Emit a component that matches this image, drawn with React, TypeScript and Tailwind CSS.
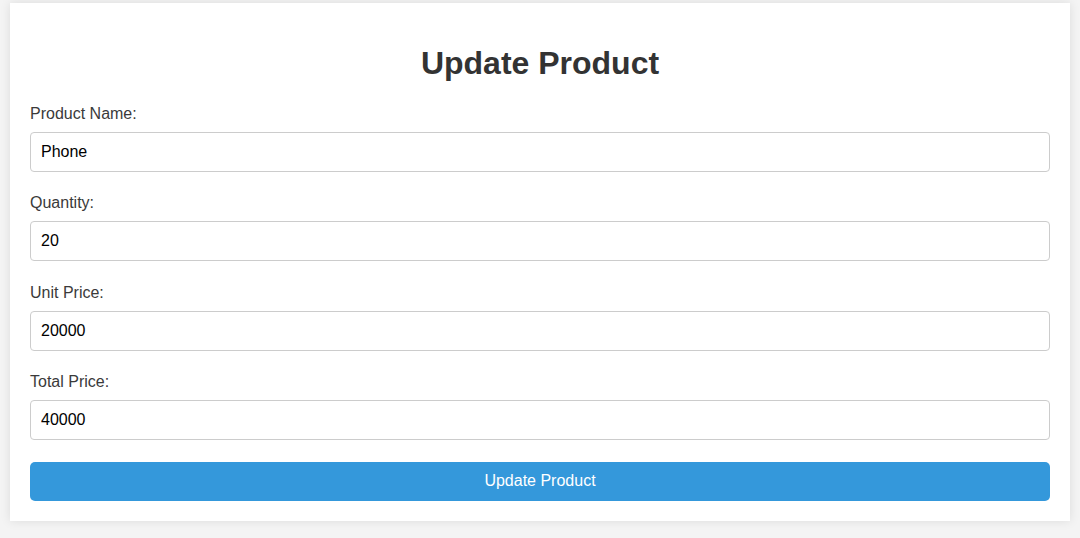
const fields = [
  { label: "Product Name:", value: "Phone" },
  { label: "Quantity:", value: "20" },
  { label: "Unit Price:", value: "20000" },
  { label: "Total Price:", value: "40000" },
];

const App = (): JSX.Element => {
  return (
    <div
      className="min-h-[538px] bg-[#f4f4f4] pt-[3px] px-[10px] pb-4"
      style={{ fontFamily: '"Liberation Sans", Arial, sans-serif' }}
    >
      <div className="bg-white p-5 shadow-[0_0_10px_rgba(0,0,0,0.1)]">
        <h2 className="text-center text-[32px] font-bold text-[#333] leading-[37px] mt-[22px] mb-[22px]">
          Update Product
        </h2>
        <form onSubmit={(e) => e.preventDefault()}>
          {fields.map((f) => (
            <div key={f.label} className="mb-[21.4px]">
              <label className="block text-base text-[#3a3a3a] leading-[20px] mb-[8px]">
                {f.label}
              </label>
              <input
                type="text"
                defaultValue={f.value}
                className="block w-full h-10 px-[10px] text-base text-black border border-[#ccc] rounded-[4px] outline-none"
              />
            </div>
          ))}
          <button
            type="submit"
            className="w-full h-[39px] bg-[#3498db] text-white text-base rounded-[5px]"
          >
            Update Product
          </button>
        </form>
      </div>
    </div>
  );
};

export default App;
